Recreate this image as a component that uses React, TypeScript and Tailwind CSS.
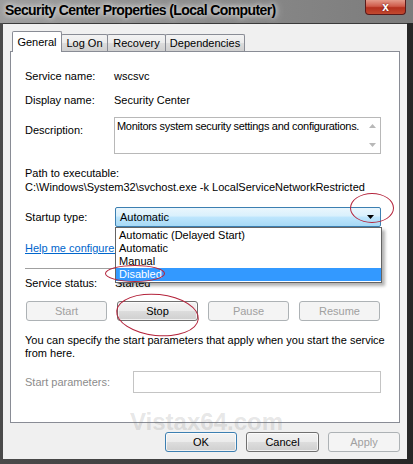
const enabledBtn =
  "h-[20px] rounded-[3px] border border-[#707070] bg-[linear-gradient(to_bottom,#f2f2f2_0%,#ebebeb_50%,#dddddd_50%,#cfcfcf_100%)] text-black flex items-center justify-center shadow-[inset_0_0_0_1px_rgba(255,255,255,0.7)]";
const disabledBtn =
  "h-[20px] rounded-[3px] border border-[#adb2b5] bg-[#f4f4f4] text-[#a0a0a0] flex items-center justify-center";

function Tab({ label, w, active }: { label: string; w: string; active?: boolean }) {
  if (active) {
    return (
      <div className={`${w} h-[21px] border border-b-0 border-[#898c95] bg-white rounded-t-[2px] flex items-center justify-center relative z-10`}>
        {label}
      </div>
    );
  }
  return (
    <div className={`${w} h-[17px] mb-px -ml-px border border-b-0 border-[#898c95] bg-[linear-gradient(to_bottom,#f3f3f3_0%,#ebebeb_50%,#dddddd_50%,#cfcfcf_100%)] rounded-t-[2px] flex items-center justify-center`}>
      {label}
    </div>
  );
}

function Arrow({ up, color }: { up?: boolean; color: string }) {
  return (
    <svg width="7" height="4" viewBox="0 0 7 4">
      <polygon points={up ? "0,4 7,4 3.5,0" : "0,0 7,0 3.5,4"} fill={color} />
    </svg>
  );
}

export default function App() {
  return (
    <div className="relative w-[413px] h-[464px] overflow-hidden bg-[linear-gradient(to_right,#4a4a4a,#3a3a3a_60%,#262626)] font-['Liberation_Sans',Arial,sans-serif] text-[11px] text-black">
      {/* Title bar */}
      <div className="h-[23px] flex items-start justify-between bg-[linear-gradient(to_right,#9c9c9c,#8a8a8a_50%,#7c7c7c)]">
        <div className="pl-[5px] pt-[3px] text-[14px] leading-[15px] font-bold tracking-[-0.6px] text-black [text-shadow:0_0_8px_#e6e6e6,0_0_4px_#dcdcdc]">
          Security Center Properties (Local Computer)
        </div>
        <div className="mr-[7px] w-[41px] h-[15px] rounded-b-[4px] border border-t-0 border-[#5a1a1a] bg-[linear-gradient(to_bottom,#e49a8a_0%,#cf5b4a_45%,#b4301e_55%,#c24a30_100%)] flex items-center justify-center text-white text-[12px] font-bold leading-none [text-shadow:0_0_2px_#5a1010]">
          x
        </div>
      </div>

      {/* Client area */}
      <div className="ml-[3px] w-[404px] h-[436px] bg-[#f0f0f0] border-t border-[#3a3a3a] pt-[7px]">
        {/* Tabs */}
        <div className="flex items-end pl-[9px] -mb-px">
          <Tab label="General" w="w-[50px]" active />
          <Tab label="Log On" w="w-[47px]" />
          <Tab label="Recovery" w="w-[59px]" />
          <Tab label="Dependencies" w="w-[80px]" />
        </div>

        {/* Panel */}
        <div className="ml-[7px] w-[390px] h-[372px] border border-[#898c95] bg-white pl-[14px] pr-[18px] leading-[14px]">
          <div className="mt-[16px] h-[15px] flex items-center">
            <div className="w-[89px]">Service name:</div>
            <div>wscsvc</div>
          </div>
          <div className="mt-[9px] h-[15px] flex items-center">
            <div className="w-[89px]">Display name:</div>
            <div>Security Center</div>
          </div>
          <div className="mt-[10px] h-[37px] flex">
            <div className="w-[89px] pt-[6px]">Description:</div>
            <div className="flex-1 border border-[#b8b8b8] flex">
              <div className="flex-1 pl-[2px] pt-[1px] whitespace-nowrap tracking-[-0.3px]">
                Monitors system security settings and configurations.
              </div>
              <div className="w-[16px] flex flex-col items-center justify-between py-[6px]">
                <Arrow up color="#b8b8b8" />
                <Arrow color="#b8b8b8" />
              </div>
            </div>
          </div>
          <div className="mt-[12px] h-[14px]">Path to executable:</div>
          <div className="h-[14px] whitespace-nowrap">C:\Windows\System32\svchost.exe -k LocalServiceNetworkRestricted</div>

          <div className="mt-[13px] h-[20px] flex items-center">
            <div className="w-[89px]">Startup type:</div>
            <div className="relative flex-1 h-[20px] ml-px">
              <div className="h-full rounded-[2px] border border-[#3c7fb1] bg-[linear-gradient(to_bottom,#eaf6fd_0%,#d9f0fc_45%,#bee6fd_50%,#a7d9f5_100%)] flex items-center justify-between pl-[4px] pr-[6px]">
                <span>Automatic</span>
                <Arrow color="#000" />
              </div>
              <div className="absolute left-0 top-full w-[267px] z-20 border border-[#646464] bg-white py-px shadow-[3px_3px_3px_rgba(0,0,0,0.3)] leading-[13px]">
                <div className="h-[13px] pl-[3px]">Automatic (Delayed Start)</div>
                <div className="h-[13px] pl-[3px]">Automatic</div>
                <div className="h-[13px] pl-[3px]">Manual</div>
                <div className="h-[13px] pl-[3px] bg-[#3399ff] text-white">Disabled</div>
              </div>
            </div>
          </div>

          <div className="mt-[14px] h-[14px] text-[#0066cc] underline whitespace-nowrap">
            Help me configure service startup options.
          </div>
          <div className="mt-[13px] h-px bg-[#a0a0a0]" />

          <div className="mt-[7px] h-[14px] flex items-center">
            <div className="w-[90px]">Service status:</div>
            <div>Started</div>
          </div>

          <div className="mt-[11px] flex gap-[10px] pl-px">
            <div className={`${disabledBtn} w-[81px]`}>Start</div>
            <div className={`${enabledBtn} w-[81px]`}>Stop</div>
            <div className={`${disabledBtn} w-[81px]`}>Pause</div>
            <div className={`${disabledBtn} w-[81px]`}>Resume</div>
          </div>

          <div className="mt-[13px] leading-[13px] whitespace-nowrap">
            You can specify the start parameters that apply when you start the service
            <br />
            from here.
          </div>

          <div className="mt-[11px] h-[22px] flex items-center">
            <div className="w-[108px] text-[#8c8c8c]">Start parameters:</div>
            <div className="flex-1 h-full border border-[#c4c4c4] bg-white" />
          </div>
        </div>

        {/* Dialog buttons */}
        <div className="mt-[9px] flex justify-end gap-[9px] pr-[7px]">
          <div className={`${enabledBtn} w-[72px] !border-[#3c7fb1] shadow-[inset_0_0_0_1px_#b6e3fa]`}>OK</div>
          <div className={`${enabledBtn} w-[73px]`}>Cancel</div>
          <div className={`${disabledBtn} w-[72px]`}>Apply</div>
        </div>
      </div>

      {/* Watermark */}
      <div className="absolute left-[130px] top-[404px] text-[24px] font-bold text-[rgba(110,110,110,0.18)] pointer-events-none">
        Vistax64.com
      </div>

      {/* Red annotation ellipses */}
      <div className="absolute left-[350px] top-[193px] w-[44px] h-[30px] rounded-[50%] border border-[#b4243c] z-30" />
      <div className="absolute left-[105px] top-[265px] w-[60px] h-[17px] rounded-[50%] border border-[#b4243c] z-30" />
      <div className="absolute left-[116px] top-[294px] w-[83px] h-[42px] rounded-[50%] border border-[#b4243c] rotate-[6deg] z-30" />
    </div>
  );
}
